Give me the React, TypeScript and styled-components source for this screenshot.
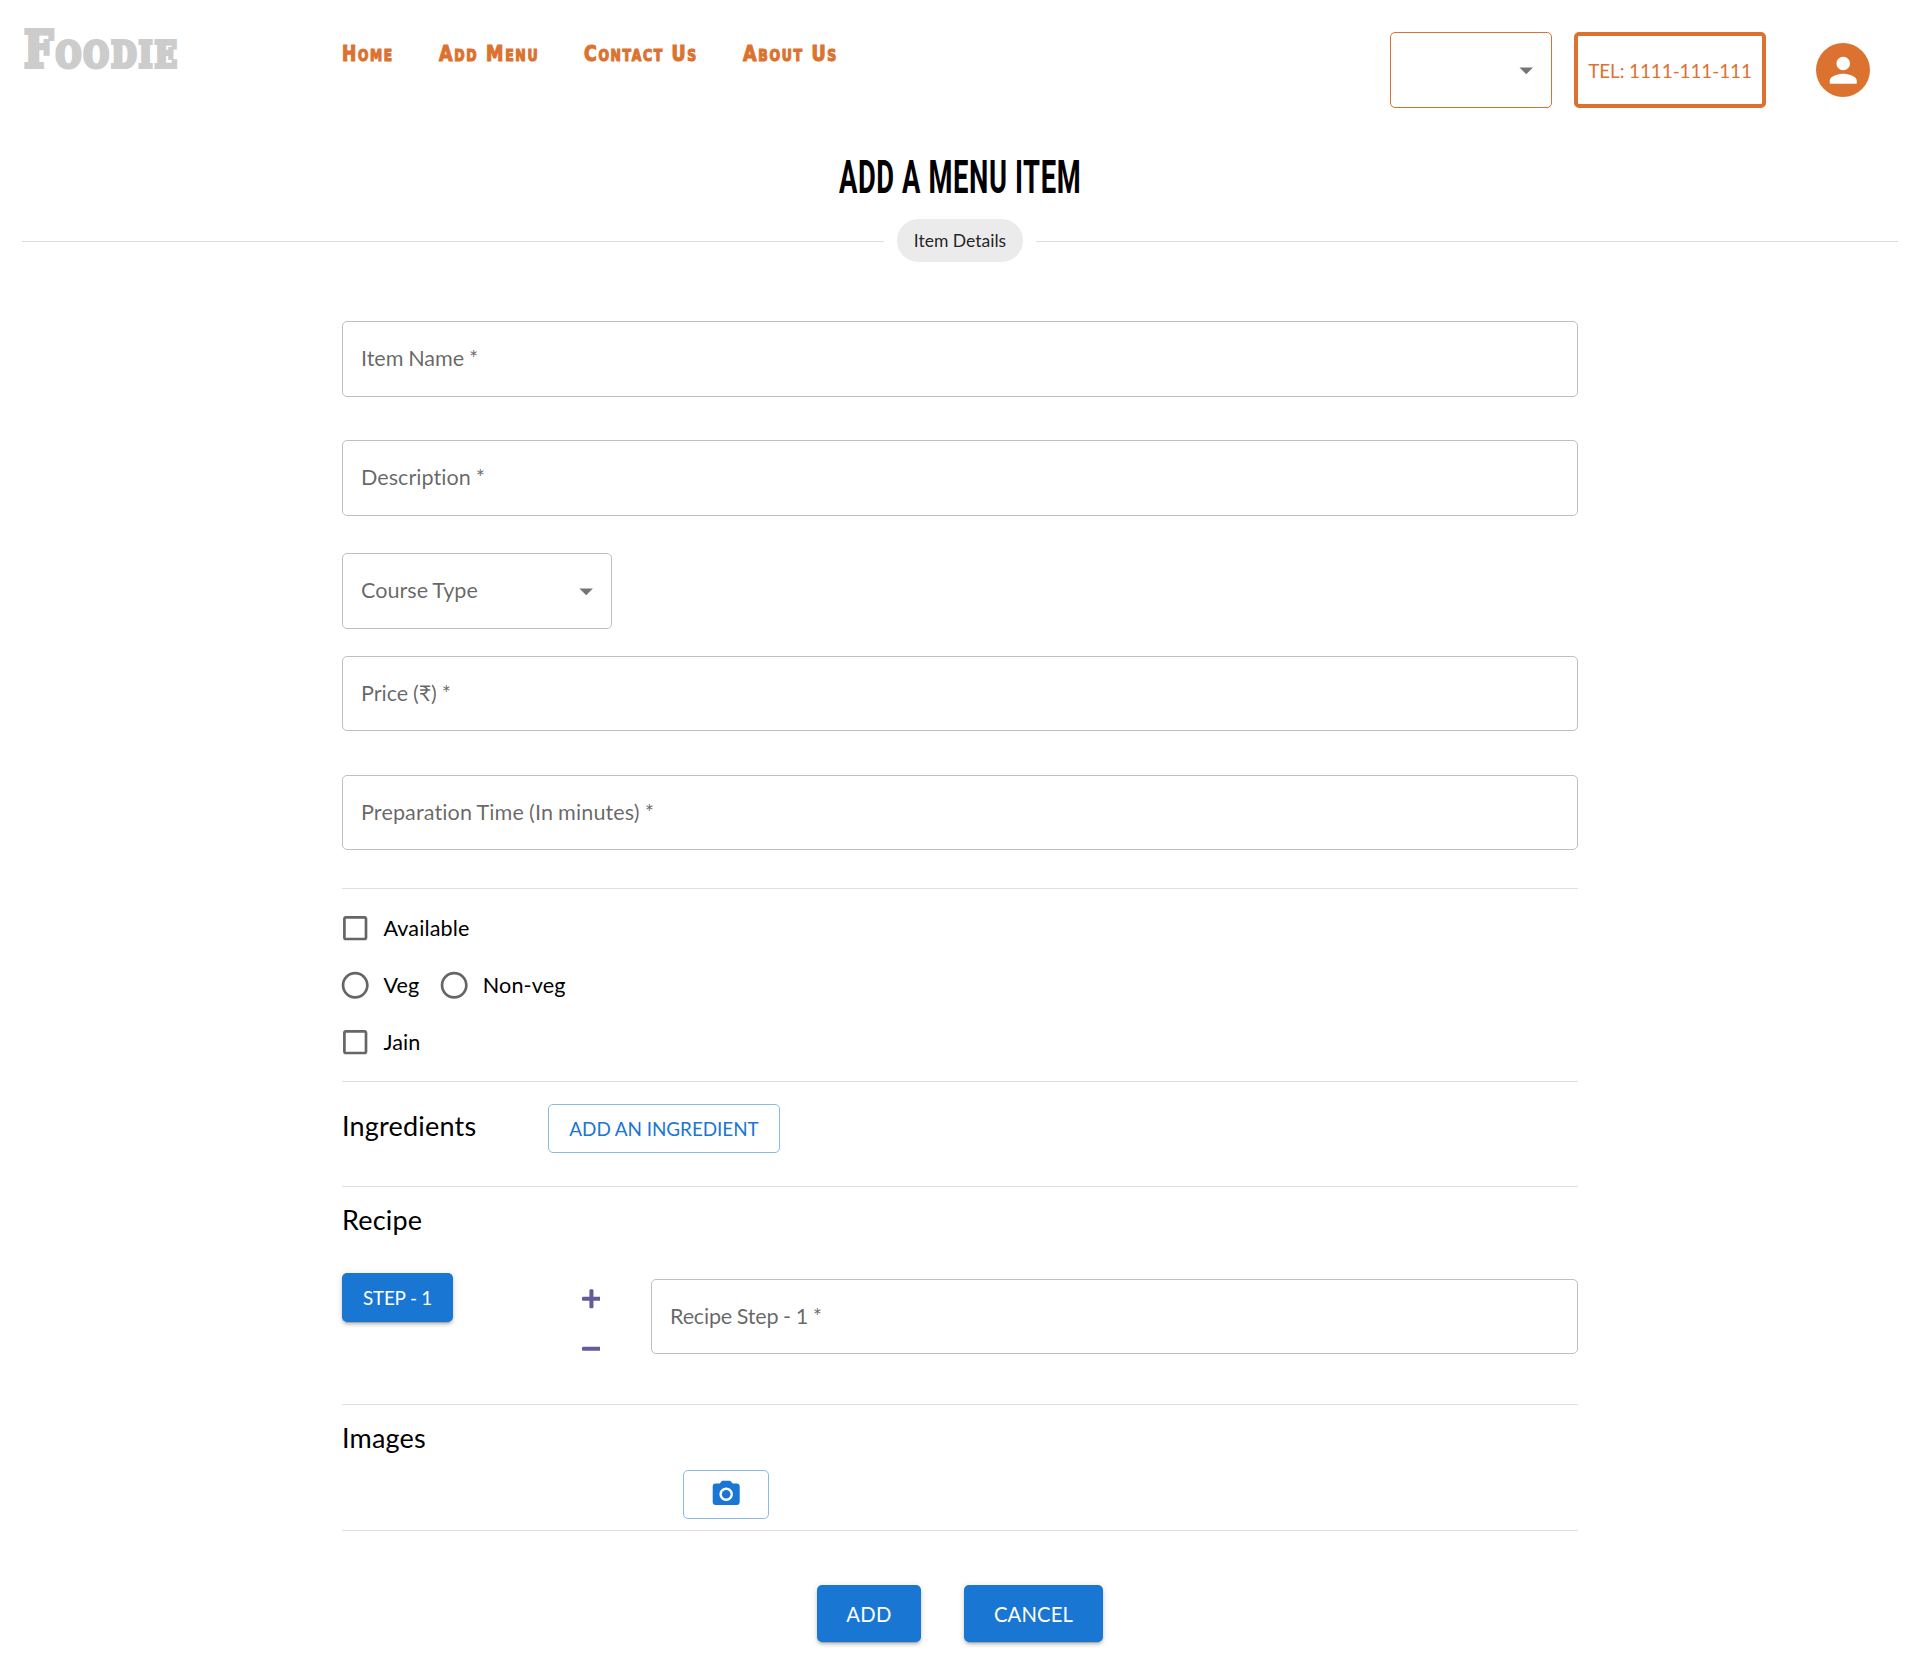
import React, { useLayoutEffect, useRef, useState } from "react";
import styled, { createGlobalStyle, css } from "styled-components";

const ORANGE = "#dc7230";
const BLUE = "#1976d2";
const LATO = `Lato, "Liberation Sans", sans-serif`;

const GlobalStyle = createGlobalStyle`
  *, *::before, *::after { box-sizing: border-box; }
  body { margin: 0; background: #fff; color: #000; font-family: ${LATO}; }
`;

const Page = styled.div`
  width: 1920px;
  height: 1664px;
  overflow: hidden;
`;

/* Display lettering, squeezed horizontally to a set width */
const FitBox = styled.span<{ $width: number }>`
  display: block;
  width: ${(p) => p.$width}px;
  white-space: nowrap;
`;
const FitInner = styled.span`
  display: inline-block;
  transform-origin: 0 50%;
`;

function FitText({ width, children }: { width: number; children: string }) {
  const ref = useRef<HTMLSpanElement>(null);
  const [scale, setScale] = useState(1);
  useLayoutEffect(() => {
    if (ref.current) setScale(width / ref.current.offsetWidth);
  }, [width]);
  return (
    <FitBox $width={width}>
      <FitInner ref={ref} style={{ transform: `scaleX(${scale})` }}>
        {children}
      </FitInner>
    </FitBox>
  );
}

const Header = styled.header`
  display: flex;
  align-items: flex-start;
  height: 148px;
  padding: 0 50px 0 24px;
`;
const Logo = styled.div`
  width: 318px;
  padding-top: 17px;
  color: #ccc;
  font: 700 51px/64px "DejaVu Serif", serif;
  font-variant: small-caps;
  letter-spacing: 3px;
  -webkit-text-stroke: 4px #ccc;
`;
const Nav = styled.nav`
  display: flex;
  flex: 1;
  gap: 45px;
  padding-top: 40px;
`;
const NavLink = styled.a`
  color: ${ORANGE};
  font: 700 21px/28px "DejaVu Sans", sans-serif;
  font-variant: small-caps;
  letter-spacing: 2px;
  -webkit-text-stroke: 1.2px ${ORANGE};
`;
const Tools = styled.div`
  display: flex;
  align-items: center;
  height: 76px;
  margin-top: 32px;
`;
const TableSelect = styled.div`
  display: flex;
  align-items: center;
  justify-content: flex-end;
  width: 162px;
  height: 76px;
  padding-right: 9px;
  border: 1px solid ${ORANGE};
  border-radius: 5px;
`;
const Telephone = styled.div`
  display: flex;
  align-items: center;
  justify-content: center;
  width: 192px;
  height: 76px;
  margin: 0 50px 0 22px;
  border: 4px solid ${ORANGE};
  border-radius: 5px;
  color: ${ORANGE};
  font-size: 18.9px;
  letter-spacing: -0.07px;
  white-space: nowrap;
`;
const Avatar = styled.div`
  display: grid;
  place-items: center;
  width: 54px;
  height: 54px;
  border-radius: 50%;
  background: ${ORANGE};
`;

const Title = styled.h1`
  display: flex;
  justify-content: center;
  margin: 0;
  height: 71px;
  font: 700 46px/58px Roboto, sans-serif;
  letter-spacing: 1px;
`;

const ChipRow = styled.div`
  display: flex;
  align-items: center;
  gap: 13px;
  padding: 0 22px;
  &::before,
  &::after {
    content: "";
    flex: 1;
    height: 1px;
    margin-top: 1px;
    background: #dcdcdc;
  }
`;
const Chip = styled.div`
  width: 126px;
  height: 43px;
  border-radius: 22px;
  background: #ebebeb;
  color: rgba(0, 0, 0, 0.87);
  font-size: 17.55px;
  line-height: 43px;
  text-align: center;
`;

const Form = styled.form`
  width: 1236px;
  margin: 59px auto 0;
`;
const Field = styled.div<{ $height?: number; $width?: number; $after?: number; $spacing?: number }>`
  display: flex;
  align-items: center;
  justify-content: space-between;
  width: ${(p) => (p.$width ? `${p.$width}px` : "100%")};
  height: ${(p) => p.$height ?? 76}px;
  margin-bottom: ${(p) => p.$after ?? 0}px;
  padding: 0 9px 0 18px;
  border: 1px solid #c0c0c0;
  border-radius: 5px;
  color: rgba(0, 0, 0, 0.6);
  font-size: 21.6px;
  letter-spacing: ${(p) => p.$spacing ?? 0.08}px;
  word-spacing: -0.6px;
  white-space: pre;
`;
const FieldLabel = styled.span`
  padding-bottom: 2px;
`;
const Rule = styled.hr`
  height: 1px;
  margin: 0;
  border: 0;
  background: #dedede;
`;
const Choices = styled.div`
  display: flex;
  flex-direction: column;
  height: 192px;
  padding-top: 11px;
`;
const ChoiceRow = styled.div`
  display: flex;
  height: 57px;
  gap: 19px;
  margin-left: -3px;
`;
const Choice = styled.label`
  display: flex;
  align-items: center;
  gap: 12px;
  font-size: 21.6px;
  letter-spacing: 0.12px;
  color: #000;
`;
const ChoiceText = styled.span`
  padding-bottom: 2px;
`;

const Section = styled.section<{ $height: number }>`
  height: ${(p) => p.$height}px;
`;
const Heading = styled.h2<{ $top: number }>`
  margin: 0;
  padding-top: ${(p) => p.$top}px;
  font-size: 27px;
  font-weight: 400;
  line-height: 36px;
  letter-spacing: 0.2px;
`;
const IngredientRow = styled.div`
  display: grid;
  grid-template-columns: 206px auto;
  justify-content: start;
`;
const Button = styled.button<{
  $variant: "contained" | "outlined";
  $width: number;
  $height?: number;
  $size?: number;
  $spacing?: number;
}>`
  display: flex;
  align-items: center;
  justify-content: center;
  width: ${(p) => p.$width}px;
  height: ${(p) => p.$height ?? 49}px;
  padding: 0;
  border: 0;
  border-radius: 5px;
  font: 400 ${(p) => p.$size ?? 18.9}px ${LATO};
  letter-spacing: ${(p) => p.$spacing ?? 0}px;
  white-space: nowrap;
  ${(p) =>
    p.$variant === "contained"
      ? css`
          background: ${BLUE};
          color: #fff;
          box-shadow: 0 4px 1px -3px rgba(0, 0, 0, 0.2), 0 3px 3px 0 rgba(0, 0, 0, 0.14),
            0 1px 7px 0 rgba(0, 0, 0, 0.12);
        `
      : css`
          background: #fff;
          color: ${BLUE};
          border: 1px solid #8cbae8;
        `}
`;
const IngredientAction = styled.div`
  padding-top: 22px;
`;
const StepRow = styled.div`
  display: grid;
  grid-template-columns: 239.5px 69.5px 1fr;
  align-items: start;
  padding-top: 35px;
`;
const StepControls = styled.div`
  display: flex;
  flex-direction: column;
  gap: 28px;
  padding-top: 15px;
`;
const StepField = styled.div`
  padding-top: 6px;
`;
const ImageAction = styled.div`
  display: flex;
  padding: 14px 0 0 341px;
`;
const Actions = styled.div`
  display: flex;
  justify-content: center;
  gap: 43px;
  padding-top: 54px;
`;

const Glyph = ({ d, size, color, children }: { d: string; size: number; color: string; children?: React.ReactNode }) => (
  <svg width={size} height={size} viewBox="0 0 24 24" fill={color}>
    {children}
    <path d={d} />
  </svg>
);

const Arrow = () => <Glyph size={32.4} color="#757575" d="M7 10l5 5 5-5z" />;
const BoxIcon = () => (
  <Glyph
    size={32.4}
    color="#666"
    d="M19 5v14H5V5h14m0-2H5c-1.1 0-2 .9-2 2v14c0 1.1.9 2 2 2h14c1.1 0 2-.9 2-2V5c0-1.1-.9-2-2-2z"
  />
);
const RadioIcon = () => (
  <Glyph
    size={32.4}
    color="#666"
    d="M12 2C6.48 2 2 6.48 2 12s4.48 10 10 10 10-4.48 10-10S17.52 2 12 2zm0 18c-4.42 0-8-3.58-8-8s3.58-8 8-8 8 3.58 8 8-3.58 8-8 8z"
  />
);
const PersonIcon = () => (
  <Glyph
    size={40.5}
    color="#fff"
    d="M12 12c2.21 0 4-1.79 4-4s-1.79-4-4-4-4 1.79-4 4 1.79 4 4 4zm0 2c-2.67 0-8 1.34-8 4v2h16v-2c0-2.66-5.33-4-8-4z"
  />
);
const CameraIcon = () => (
  <Glyph
    size={32.4}
    color={BLUE}
    d="M9 2L7.17 4H4c-1.1 0-2 .9-2 2v12c0 1.1.9 2 2 2h16c1.1 0 2-.9 2-2V6c0-1.1-.9-2-2-2h-3.17L15 2H9zm3 15c-2.76 0-5-2.24-5-5s2.24-5 5-5 5 2.24 5 5-2.24 5-5 5z"
  >
    <circle cx="12" cy="12" r="3.2" />
  </Glyph>
);
const StepGlyph = ({ d }: { d: string }) => (
  <svg width="18.9" height="21.6" viewBox="0 0 448 512" fill="#665a98">
    <path d={d} />
  </svg>
);

const links = [
  { label: "Home", width: 52 },
  { label: "Add Menu", width: 100 },
  { label: "Contact Us", width: 114 },
  { label: "About Us", width: 95 },
];

export default function App() {
  return (
    <Page>
      <GlobalStyle />
      <Header>
        <Logo>
          <FitText width={155}>Foodie</FitText>
        </Logo>
        <Nav>
          {links.map((l) => (
            <NavLink key={l.label}>
              <FitText width={l.width}>{l.label}</FitText>
            </NavLink>
          ))}
        </Nav>
        <Tools>
          <TableSelect>
            <Arrow />
          </TableSelect>
          <Telephone>TEL: 1111-111-111</Telephone>
          <Avatar>
            <PersonIcon />
          </Avatar>
        </Tools>
      </Header>

      <Title>
        <FitText width={242}>ADD A MENU ITEM</FitText>
      </Title>
      <ChipRow>
        <Chip>Item Details</Chip>
      </ChipRow>

      <Form>
        <Field $after={43} $spacing={-0.05}>
          <FieldLabel>Item Name *</FieldLabel>
        </Field>
        <Field $after={37} $spacing={0.02}>
          <FieldLabel>Description *</FieldLabel>
        </Field>
        <Field $width={270} $after={27} $spacing={0}>
          <FieldLabel>Course Type</FieldLabel>
          <Arrow />
        </Field>
        <Field $height={75} $after={44} $spacing={-0.05}>
          <FieldLabel>Price (₹) *</FieldLabel>
        </Field>
        <Field $height={75} $after={38} $spacing={0.11}>
          <FieldLabel>Preparation Time (In minutes) *</FieldLabel>
        </Field>
        <Rule />
        <Choices>
          <ChoiceRow>
            <Choice>
              <BoxIcon />
              <ChoiceText>Available</ChoiceText>
            </Choice>
          </ChoiceRow>
          <ChoiceRow>
            <Choice>
              <RadioIcon />
              <ChoiceText>Veg</ChoiceText>
            </Choice>
            <Choice>
              <RadioIcon />
              <ChoiceText>Non-veg</ChoiceText>
            </Choice>
          </ChoiceRow>
          <ChoiceRow>
            <Choice>
              <BoxIcon />
              <ChoiceText>Jain</ChoiceText>
            </Choice>
          </ChoiceRow>
        </Choices>
        <Rule />
        <Section $height={104}>
          <IngredientRow>
            <Heading $top={26}>Ingredients</Heading>
            <IngredientAction>
              <Button type="button" $variant="outlined" $width={232} $spacing={-0.05}>
                ADD AN INGREDIENT
              </Button>
            </IngredientAction>
          </IngredientRow>
        </Section>
        <Rule />
        <Section $height={217}>
          <Heading $top={15}>Recipe</Heading>
          <StepRow>
            <Button type="button" $variant="contained" $width={111} $spacing={-0.2}>
              STEP - 1
            </Button>
            <StepControls>
              <StepGlyph d="M416 208H272V64c0-17.67-14.33-32-32-32h-32c-17.67 0-32 14.33-32 32v144H32c-17.67 0-32 14.33-32 32v32c0 17.67 14.33 32 32 32h144v144c0 17.67 14.33 32 32 32h32c17.67 0 32-14.33 32-32V304h144c17.67 0 32-14.33 32-32v-32c0-17.67-14.33-32-32-32z" />
              <StepGlyph d="M416 208H32c-17.67 0-32 14.33-32 32v32c0 17.67 14.33 32 32 32h384c17.67 0 32-14.33 32-32v-32c0-17.67-14.33-32-32-32z" />
            </StepControls>
            <StepField>
              <Field $height={75} $spacing={-0.2}>
                <FieldLabel>Recipe Step - 1 *</FieldLabel>
              </Field>
            </StepField>
          </StepRow>
        </Section>
        <Rule />
        <Section $height={125}>
          <Heading $top={15}>Images</Heading>
          <ImageAction>
            <Button type="button" $variant="outlined" $width={86}>
              <CameraIcon />
            </Button>
          </ImageAction>
        </Section>
        <Rule />
        <Actions>
          <Button type="button" $variant="contained" $width={104} $height={57} $size={20.25} $spacing={0.3}>
            ADD
          </Button>
          <Button type="button" $variant="contained" $width={139} $height={57} $size={20.25} $spacing={0.15}>
            CANCEL
          </Button>
        </Actions>
      </Form>
    </Page>
  );
}
